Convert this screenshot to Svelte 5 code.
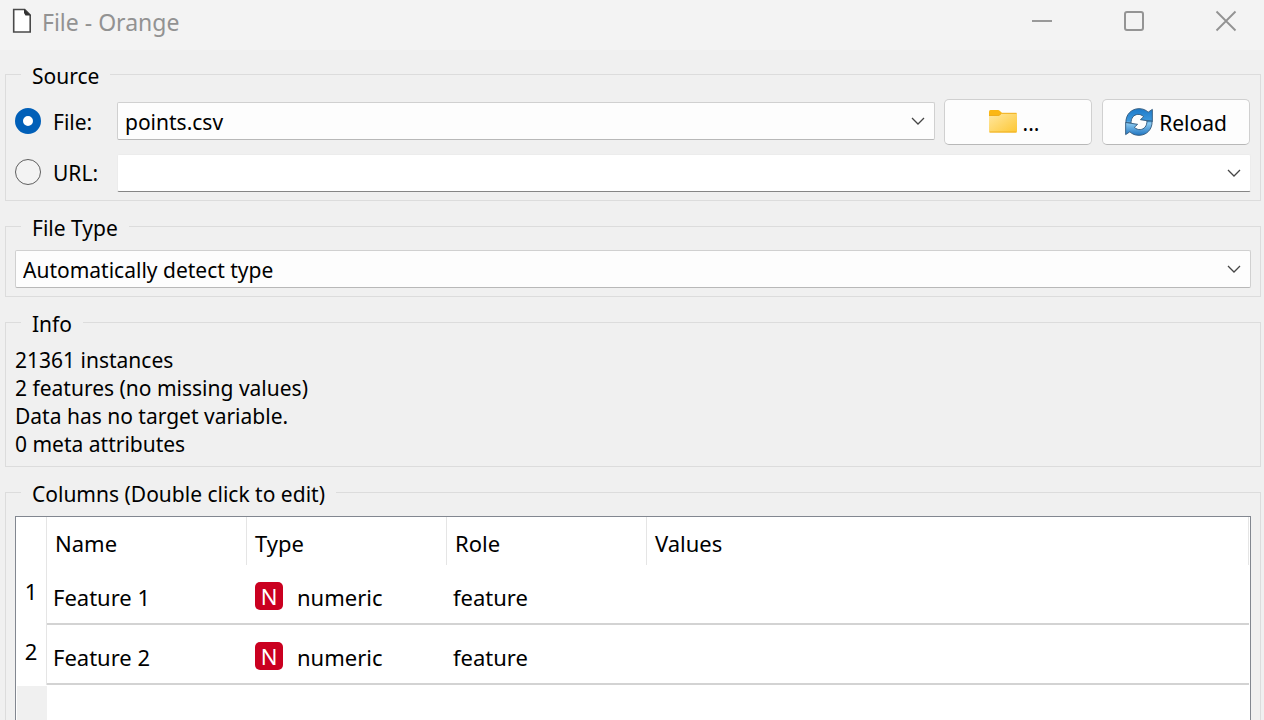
<script>
  let source = $state('file');
  let url = $state('');
  const columns = ['Name', 'Type', 'Role', 'Values'];
  const rows = [
    { name: 'Feature 1', type: 'numeric', role: 'feature' },
    { name: 'Feature 2', type: 'numeric', role: 'feature' }
  ];
  const info = [
    '21361 instances',
    '2 features (no missing values)',
    'Data has no target variable.',
    '0 meta attributes'
  ];
</script>

{#snippet chevron()}
  <svg class="chevron" viewBox="0 0 14 8" aria-hidden="true">
    <path d="M1 1l6 6 6-6" fill="none" stroke="#454545" stroke-width="1.3" />
  </svg>
{/snippet}

<div class="window">
  <header>
    <svg class="doc" viewBox="0 0 20 26" aria-hidden="true">
      <path d="M1.700 1.500h11l5.500 5.500v17H1.700z" fill="#fff" stroke="#4a4a4a" stroke-width="1.6" />
      <path d="M12 1l7 6.500h-5.500L12 5z" fill="#333" />
    </svg>
    <h1>File - Orange</h1>
    <button class="caption" aria-label="Minimize">
      <svg viewBox="0 0 22 22"><path d="M1 11h20" stroke="#999" stroke-width="2" /></svg>
    </button>
    <button class="caption" aria-label="Maximize">
      <svg viewBox="0 0 22 22"><rect x="2" y="2" width="18" height="18" rx="2" fill="none" stroke="#949494" stroke-width="2" /></svg>
    </button>
    <button class="caption" aria-label="Close">
      <svg viewBox="0 0 22 22"><path d="M1.500 1.500l19 19M20.500 1.500l-19 19" stroke="#929292" stroke-width="1.800" /></svg>
    </button>
  </header>

  <main>
    <fieldset class="source">
      <legend>Source</legend>
      <div class="line first">
        <label class="choice"><input type="radio" name="source" value="file" bind:group={source} />File:</label>
        <div class="combo">
          <select aria-label="File"><option>points.csv</option></select>
          {@render chevron()}
        </div>
        <button class="push browse" aria-label="Browse">
          <svg class="folder" viewBox="0 0 28 23" aria-hidden="true">
            <defs>
              <linearGradient id="folder" x1="0" y1="0" x2="1" y2="1">
                <stop offset="0" stop-color="#ffe8a3" />
                <stop offset="1" stop-color="#fdc733" />
              </linearGradient>
            </defs>
            <path d="M0 1.500Q0 0 1.500 0H9q1 0 2 1l2 2v5H0z" fill="#fbb714" />
            <path d="M0 6h8.500q1.500 0 2.500-1l2-2h14q1 0 1 1v17q0 1.500-1.500 1.500h-25Q0 22.500 0 21z" fill="url(#folder)" />
            <path d="M0 5.500h8.500q1.500 0 2.500-1l1.500-1.200H27.500M.5 22h27" fill="none" stroke="#efae1c" />
          </svg>
          <span>...</span>
        </button>
        <button class="push">
          <svg class="reload" viewBox="0 0 30 30" aria-hidden="true">
            <defs>
              <linearGradient id="sync" gradientUnits="userSpaceOnUse" x1="0" y1="0" x2="0" y2="30">
                <stop offset="0" stop-color="#1b78c8" />
                <stop offset=".46" stop-color="#3d98dc" />
                <stop offset=".54" stop-color="#8ccbf2" />
                <stop offset="1" stop-color="#1a70be" />
              </linearGradient>
            </defs>
            <g fill="url(#sync)" stroke="#31597d" stroke-linejoin="round">
              <path d="M1 16C.5 7 7 .7 15 .7c4 0 7.300 1.300 9.800 3.800L29.300 1.500V14.500L16.500 12.500L20 9.300C16 5.500 11 6.500 8.500 9.500 7 11.500 6.500 13.500 6.500 16z" />
              <path d="M29 14c.5 9-6 15.300-14 15.300-4 0-7.300-1.300-9.800-3.800L.7 28.500V15.500L13.500 17.500L10 20.700c4 3.800 9 2.800 11.500-.2 1.500-2 2-4 2-6.500z" />
            </g>
          </svg>
          <span>Reload</span>
        </button>
      </div>
      <div class="line">
        <label class="choice"><input type="radio" name="source" value="url" bind:group={source} />URL:</label>
        <div class="combo editable">
          <input type="text" aria-label="URL" bind:value={url} />
          {@render chevron()}
        </div>
      </div>
    </fieldset>

    <fieldset>
      <legend>File Type</legend>
      <div class="combo">
        <select aria-label="File type"><option>Automatically detect type</option></select>
        {@render chevron()}
      </div>
    </fieldset>

    <fieldset>
      <legend>Info</legend>
      {#each info as text}<p>{text}</p>{/each}
    </fieldset>

    <fieldset>
      <legend>Columns (Double click to edit)</legend>
      <div class="grid">
        <table>
          <thead>
            <tr>
              <th class="index"></th>
              {#each columns as column}<th class={column.toLowerCase()}>{column}</th>{/each}
            </tr>
          </thead>
          <tbody>
            {#each rows as row, i}
              <tr>
                <th class="index">{i + 1}</th>
                <td>{row.name}</td>
                <td><div class="type"><span class="badge">N</span>{row.type}</div></td>
                <td>{row.role}</td>
                <td></td>
              </tr>
            {/each}
          </tbody>
        </table>
        <div class="gutter"></div>
      </div>
    </fieldset>
  </main>
</div>

<style>
  :global(body) { margin: 0; background: #f0f0f0; }
  .window {
    height: 100vh;
    overflow: hidden;
    background: #f0f0f0;
    color: #000;
    font: 21px/28px "Noto Sans", sans-serif;
  }
  .window * { box-sizing: border-box; }
  button, input, select { font: inherit; color: inherit; margin: 0; }

  header { display: flex; align-items: center; height: 50px; padding: 0 0 6px 12px; background: #f3f3f3; }
  h1 { flex: 1; margin: 0 0 0 10px; color: #929292; font-size: 23px; font-weight: 400; line-height: 32px; }
  .doc { width: 20px; height: 26px; margin-bottom: 2px; }
  .caption { display: flex; align-items: center; justify-content: center; width: 92px; height: 44px; padding: 0 0 2px; border: 0; background: none; }
  .caption:last-child { width: 84px; padding-left: 8px; }
  .caption svg { width: 22px; height: 22px; }

  main { padding: 9px 3px 0 5px; }
  fieldset { min-width: 0; margin: 0 0 10px; padding: 9px 9px 8px; border: 1px solid #dcdcdc; }
  legend { height: 30px; margin-left: 6px; padding: 3px 11px 0; }
  p { margin: 0; }

  .line { display: flex; align-items: center; }
  .first { margin: 1px 1px 9px 0; }
  .choice { display: flex; align-items: center; gap: 12px; width: 102px; height: 38px; }
  .choice input { appearance: none; width: 26px; height: 26px; margin-bottom: 3px; border: 1px solid #5f5f5f; border-radius: 50%; background: #f3f3f3; }
  .choice input:checked { border: 8px solid #005fb8; background: #fff; }

  .combo { position: relative; flex: 1; height: 38px; }
  .first .combo { margin-bottom: 2px; }
  .combo select, .combo input {
    display: block; width: 100%; height: 38px; padding: 1px 40px 0 7px; appearance: none;
    border: 1px solid #d0d0d0; border-bottom-color: #b8b8b8; border-radius: 2px; background: #fdfdfd; outline: 0;
  }
  .editable input { border-color: #ececec; border-bottom-color: #868686; background: #fff; }
  .chevron { position: absolute; right: 10px; top: 15px; width: 14px; height: 8px; pointer-events: none; }

  .push {
    display: flex; align-items: center; justify-content: center; gap: 6px;
    width: 148px; height: 46px; margin-left: 10px; padding: 2px 0 0;
    border: 1px solid #d0d0d0; border-bottom-color: #b8b8b8; border-radius: 5px; background: #fdfdfd;
  }
  .browse { margin-left: 9px; padding-right: 8px; }
  .folder { width: 28px; height: 23px; margin-bottom: 3px; }
  .reload { width: 28px; height: 28px; margin-bottom: 3px; }

  .grid { height: 280px; border: 1px solid #828790; background: #fff; display: flex; flex-direction: column; }
  table { width: 100%; table-layout: fixed; border-collapse: separate; border-spacing: 0; padding-right: 1px; font-size: 22px; }
  th, td { padding: 0; font-weight: 400; text-align: left; }
  thead th { height: 48px; padding: 3px 0 0 8px; border-right: 1px solid #e5e5e5; }
  .name, th.type, .role { width: 200px; }
  td { height: 60px; padding: 6px 0 0 6px; border-bottom: 2px solid #d3d3d3; }
  th.index { width: 31px; padding-left: 0; text-align: center; border-right: 1px solid #e5e5e5; }
  tbody th { padding-bottom: 8px; }
  div.type { display: flex; align-items: center; padding-left: 2px; }
  .badge { width: 28px; height: 28px; margin: -3px 14px 0 0; border-radius: 5px; background: #ca0020; color: #fff; text-align: center; line-height: 28px; }
  .gutter { flex: 1; width: 31px; margin-top: 1px; background: #f0f0f0; border-left: 1px solid #fff; }
</style>
